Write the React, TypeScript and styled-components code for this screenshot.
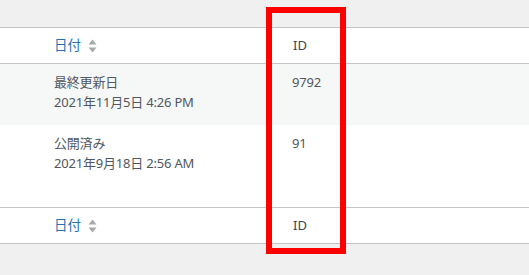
import React from 'react'
import styled, { createGlobalStyle } from 'styled-components'

const GlobalStyle = createGlobalStyle`
  html, body {
    margin: 0;
    padding: 0;
    background: #f0f0f1;
    font-family: 'Noto Sans', 'Noto Sans CJK JP', sans-serif;
    font-size: 13px;
    color: #50575e;
  }
`

type Post = { status: string; date: string; id: string; height: number }

const posts: Post[] = [
  { status: '最終更新日', date: '2021年11月5日 4:26 PM', id: '9792', height: 61 },
  { status: '公開済み', date: '2021年9月18日 2:56 AM', id: '91', height: 82 },
]

const SortIcon = () => (
  <svg width="9" height="14" viewBox="0 0 9 14" aria-hidden="true">
    <path d="M4.5 0.5 L8.5 5.5 L0.5 5.5 Z" fill="#a7aaad" />
    <path d="M0.5 8.5 L8.5 8.5 L4.5 13.5 Z" fill="#a7aaad" />
  </svg>
)

const HeadRow = () => (
  <HeaderRow>
    <HeadCell />
    <HeadCell>
      <SortLink>
        <span>日付</span>
        <SortIcon />
      </SortLink>
    </HeadCell>
    <HeadCell>
      <PlainHead>ID</PlainHead>
    </HeadCell>
  </HeaderRow>
)

export default function App() {
  return (
    <>
      <GlobalStyle />
      <Page>
        <Table>
          <HeadRow />
          {posts.map((p, i) => (
            <Row key={p.id} $alt={i % 2 === 0} $height={p.height}>
              <Cell />
              <Cell>
                {p.status}
                <br />
                {p.date}
              </Cell>
              <Cell>{p.id}</Cell>
            </Row>
          ))}
          <FooterRow>
            <HeadRow />
          </FooterRow>
        </Table>
        <Highlight />
      </Page>
    </>
  )
}

const Page = styled.div`
  position: relative;
  width: 529px;
  height: 275px;
  padding-top: 27px;
  box-sizing: border-box;
  overflow: hidden;
`

const Table = styled.div`
  background: #fff;
  border-top: 1px solid #c3c4c7;
  border-bottom: 1px solid #c3c4c7;
`

const Grid = styled.div`
  display: grid;
  grid-template-columns: 44px 238px 1fr;
`

const HeaderRow = styled(Grid)`
  border-bottom: 1px solid #c3c4c7;
  line-height: 19px;
`

const FooterRow = styled.div`
  border-top: 1px solid #c3c4c7;

  & > div {
    border-bottom: none;
  }
`

const Row = styled(Grid)<{ $alt: boolean; $height: number }>`
  background: ${(p) => (p.$alt ? '#f6f7f7' : '#fff')};
  min-height: ${(p) => p.$height}px;
  box-sizing: border-box;
  line-height: 19.5px;
  padding-top: 1px;
`

const Cell = styled.div`
  padding: 8px 10px;
  white-space: nowrap;
  letter-spacing: -0.2px;
`

const HeadCell = styled.div`
  padding: 8px 10px;
  white-space: nowrap;
`

const SortLink = styled.span`
  display: inline-flex;
  align-items: center;
  gap: 7px;
  color: #2271b1;
  font-size: 13.5px;
`

const PlainHead = styled.span`
  color: #3c434a;
  padding-left: 1px;
`

const Highlight = styled.div`
  position: absolute;
  left: 266px;
  top: 7px;
  width: 80px;
  height: 247px;
  box-sizing: border-box;
  border: 6px solid #ff0000;
`
